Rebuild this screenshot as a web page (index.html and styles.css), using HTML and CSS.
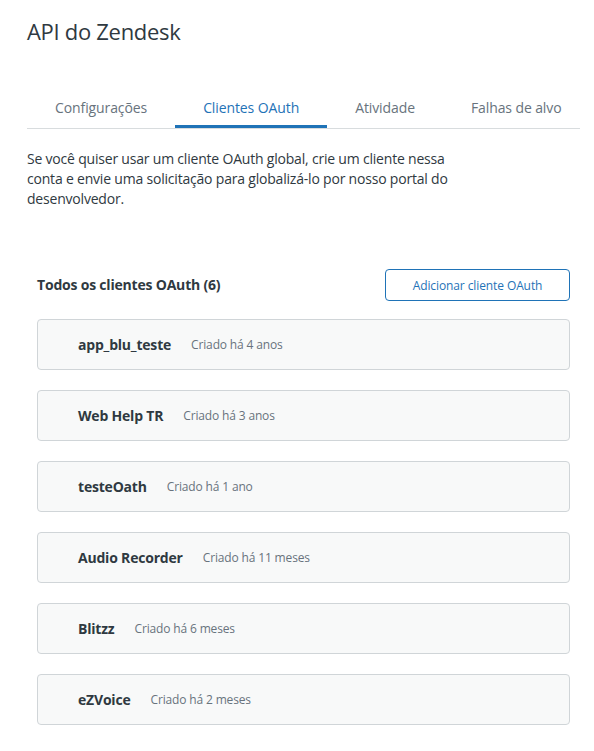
FILE: index.html
```html
<!DOCTYPE html>
<html lang="pt-BR">
<head>
<meta charset="utf-8">
<title>API do Zendesk</title>
<link rel="stylesheet" href="styles.css">
</head>
<body>
<main class="page">
  <h1 class="title">API do Zendesk</h1>
  <nav class="tabs">
    <div class="tab">Configurações</div>
    <div class="tab tab-active">Clientes OAuth</div>
    <div class="tab">Atividade</div>
    <div class="tab">Falhas de alvo</div>
  </nav>
  <p class="intro">Se você quiser usar um cliente OAuth global, crie um cliente nessa conta e envie uma solicitação para globalizá-lo por nosso portal do desenvolvedor.</p>
  <section class="clients">
    <div class="clients-head">
      <h2 class="clients-title">Todos os clientes OAuth (6)</h2>
      <button class="btn">Adicionar cliente OAuth</button>
    </div>
    <ul class="client-list">
      <li class="client"><span class="client-name">app_blu_teste</span><span class="client-meta">Criado há 4 anos</span></li>
      <li class="client"><span class="client-name">Web Help TR</span><span class="client-meta">Criado há 3 anos</span></li>
      <li class="client"><span class="client-name">testeOath</span><span class="client-meta">Criado há 1 ano</span></li>
      <li class="client"><span class="client-name">Audio Recorder</span><span class="client-meta">Criado há 11 meses</span></li>
      <li class="client"><span class="client-name">Blitzz</span><span class="client-meta">Criado há 6 meses</span></li>
      <li class="client"><span class="client-name">eZVoice</span><span class="client-meta">Criado há 2 meses</span></li>
    </ul>
  </section>
</main>
</body>
</html>
```
FILE: styles.css
```css
* { box-sizing: border-box; }
html, body { margin: 0; padding: 0; background: #fff; }
body {
  font-family: "Open Sans", "Noto Sans", sans-serif;
  font-size: 14px;
  line-height: 20px;
  color: #2f3941;
  letter-spacing: -0.2px;
}
.page { padding: 17px 14px 0 27px; }
.title {
  margin: 0;
  font-size: 22px;
  line-height: 28px;
  font-weight: 400;
  letter-spacing: -0.3px;
  color: #2f3941;
}
.tabs {
  display: flex;
  margin-top: 43px;
  border-bottom: 1px solid #d8dcde;
  overflow: hidden;
  white-space: nowrap;
}
.tab {
  padding: 10px 28px 7px;
  border-bottom: 3px solid transparent;
  color: #68737d;
  flex: none;
  letter-spacing: -0.1px;
}
.tab-active {
  color: #1f73b7;
  border-bottom-color: #1f73b7;
}
.intro {
  margin: 20px 0 0;
  max-width: 452px;
}
.clients { margin: 60px 10px 0 10px; }
.clients-head {
  display: flex;
  align-items: center;
  justify-content: space-between;
}
.clients-title {
  margin: 0;
  font-size: 14px;
  font-weight: 700;
  line-height: 20px;
}
.btn {
  width: 185px;
  height: 32px;
  border: 1px solid #1f73b7;
  border-radius: 4px;
  background: #fff;
  color: #1f73b7;
  font-family: inherit;
  font-size: 12px;
  letter-spacing: -0.1px;
  padding: 0;
}
.client-list {
  list-style: none;
  margin: 18px 0 0;
  padding: 0;
  display: flex;
  flex-direction: column;
  gap: 20px;
}
.client {
  display: flex;
  align-items: center;
  gap: 20px;
  height: 51px;
  padding: 0 40px;
  background: #f8f9f9;
  border: 1px solid #d0d5d8;
  border-radius: 4px;
}
.client-name { font-weight: 700; }
.client-meta {
  font-size: 12px;
  color: #68737d;
  letter-spacing: -0.15px;
}
```
